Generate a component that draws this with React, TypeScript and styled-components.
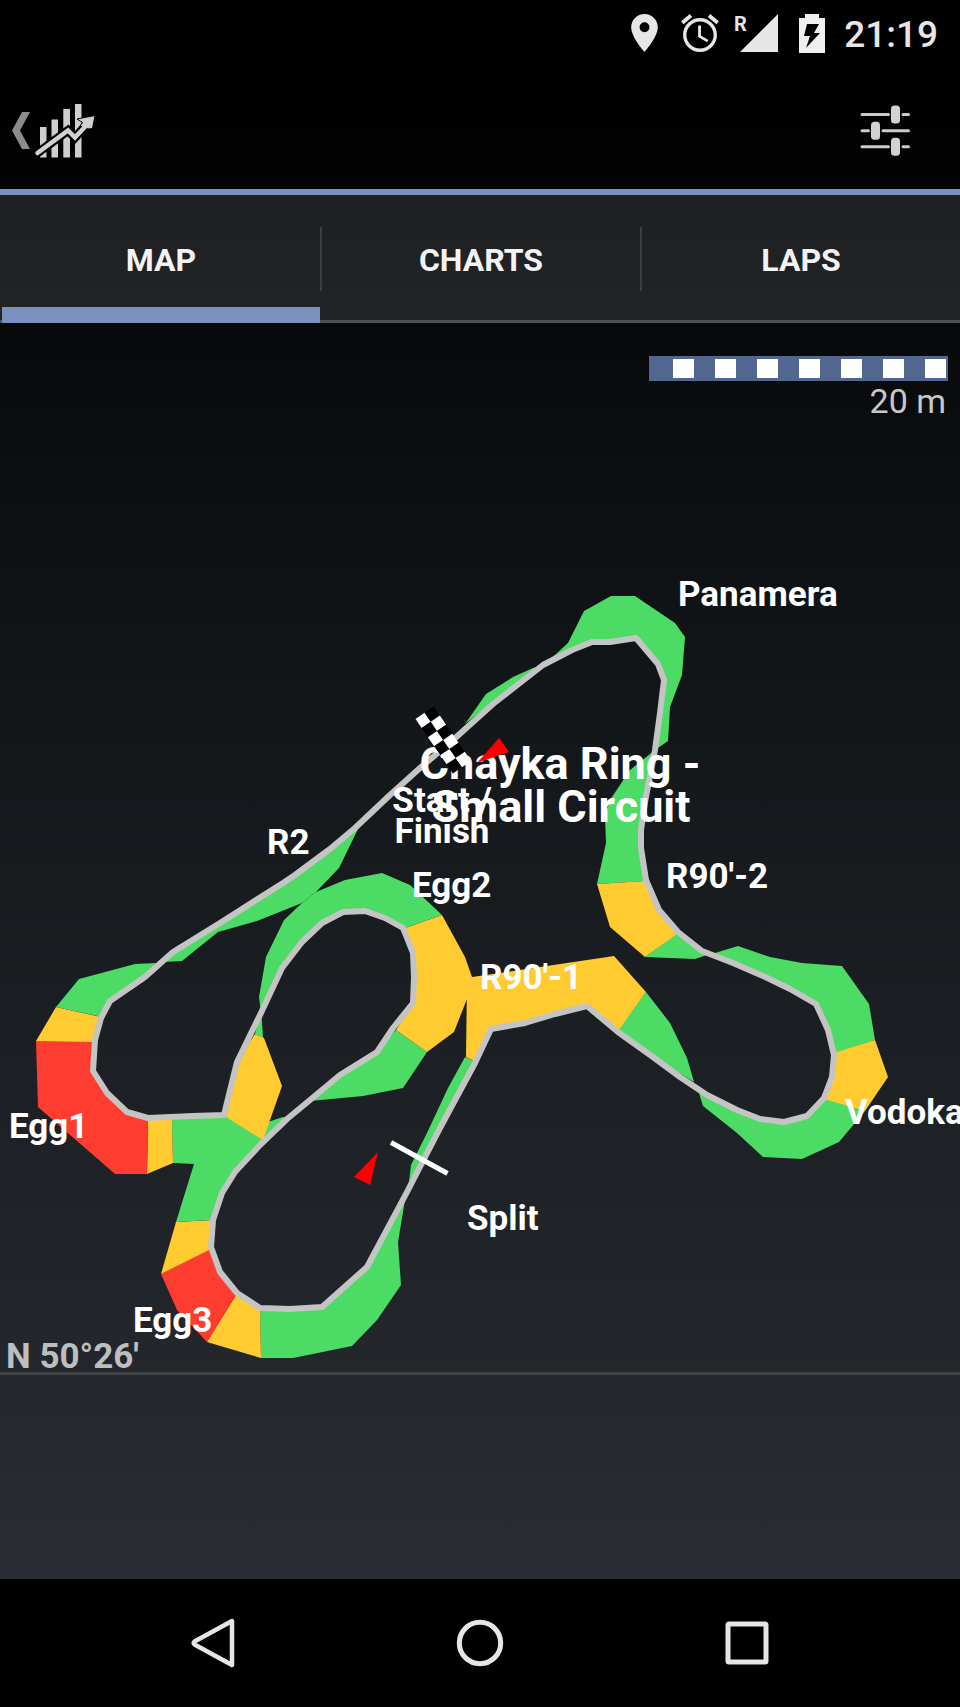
import React, { useState } from "react";
import styled, { createGlobalStyle } from "styled-components";

const GlobalStyle = createGlobalStyle`
  * { box-sizing: border-box; }
  body {
    margin: 0;
    background: #000;
    color: #fff;
    font-family: Roboto, "Liberation Sans", sans-serif;
  }
`;

const Screen = styled.div`
  display: flex;
  flex-direction: column;
  overflow: hidden;
  background: #000;
`;

const Window = styled.div`
  display: flex;
  flex-direction: column;
  background: linear-gradient(
    #000 0%,
    #000001 6%,
    #08090b 21%,
    #121518 42%,
    #1b1e22 64%,
    #23272b 86%,
    #2a2d34 100%
  );
`;

const StatusBar = styled.div`
  display: flex;
  align-items: center;
  justify-content: flex-end;
  height: 72px;
  padding: 0 22px 6px 0;
  color: #e6e6e6;
`;

const StatusIcon = styled.span`
  display: flex;
  justify-content: center;
  width: 56px;
`;

const Clock = styled.time`
  padding: 4px 0 0 4px;
  font-size: 37px;
  line-height: 40px;
  font-weight: 500;
`;

const AppBar = styled.header`
  display: flex;
  align-items: center;
  justify-content: space-between;
  height: 123px;
  padding: 0 48px 0 8px;
  border-bottom: 6px solid #7b90bd;
`;

const IconButton = styled.button`
  display: flex;
  padding: 0;
  border: 0;
  background: none;
  cursor: pointer;
`;

const TabBar = styled.div`
  display: grid;
  grid-template-columns: repeat(3, 1fr);
  height: 128px;
  background: linear-gradient(#1e1f21, #232426);
  box-shadow: inset 0 -3px #4f5053;
`;

const Tab = styled.button<{ $active: boolean }>`
  position: relative;
  padding: 2px 0 0 2px;
  border: 0;
  background: none;
  color: #f3f3f5;
  font-family: inherit;
  font-size: 32px;
  line-height: 40px;
  font-weight: 700;
  cursor: pointer;

  &:not(:first-child)::before {
    content: "";
    position: absolute;
    left: 0;
    top: 32px;
    width: 2px;
    height: 64px;
    background: #3c3d40;
  }

  &::after {
    content: "";
    position: absolute;
    left: 2px;
    right: 0;
    bottom: 0;
    height: 16px;
    background: ${(p) => (p.$active ? "#7b90bd" : "none")};
  }
`;

const MapPanel = styled.main`
  position: relative;
`;

const TrackMap = styled.svg`
  display: block;
  width: 100%;
  height: auto;
  font-family: inherit;
`;

const ScaleLegend = styled.div`
  position: absolute;
  top: 33px;
  right: 12px;
  display: flex;
  flex-direction: column;
  align-items: flex-end;
`;

const ScaleBar = styled.div`
  display: flex;
  justify-content: flex-end;
  gap: 21px;
  width: 299px;
  height: 25px;
  padding: 3px 2px;
  background: #526790;
`;

const ScaleCell = styled.span`
  width: 21px;
  background: #fff;
`;

const ScaleText = styled.span`
  padding-right: 2px;
  color: #c8c8ca;
  font-size: 34px;
  line-height: 40px;
`;

const NavBar = styled.nav`
  display: flex;
  height: 128px;
  padding: 0 80px;
  background: #000;
`;

const NavButton = styled.button`
  display: flex;
  flex: 1;
  align-items: center;
  justify-content: center;
  padding: 0;
  border: 0;
  background: none;
  cursor: pointer;
`;

const GREEN = "#4cdb64";
const YELLOW = "#ffcb30";
const RED = "#ff3c30";

const bands: { fill: string; points: string }[] = [
  { fill: GREEN, points: "465,724 486,694 513,677 533,668 543,665 555,655 568,643 584,611 611,596 635,596 675,623 685,637 682,675 670,707 668,741 655,750 660,713 664,680 658,664 636,638 610,643 592,643 572,650 543,665 493,702" },
  { fill: GREEN, points: "655,750 630,770 610,800 605,817 606,843 597,884 646,881 641,848 641,830 645,800" },
  { fill: YELLOW, points: "597,884 610,927 645,957 677,935 659,910 645,881" },
  { fill: GREEN, points: "645,957 695,959 707,955 702,951 677,934" },
  { fill: GREEN, points: "707,955 715,953 738,946 770,957 802,963 842,966 869,1004 875,1040 834,1054 828,1030 816,1004 790,988 763,975 733,963" },
  { fill: YELLOW, points: "875,1040 888,1077 865,1111 824,1100 832,1077 834,1053" },
  { fill: GREEN, points: "865,1111 839,1142 802,1159 763,1157 737,1133 703,1106 698,1090 707,1095 737,1111 760,1120 784,1123 807,1116 824,1099" },
  { fill: GREEN, points: "694,1082 687,1058 670,1023 646,992 617,1031 653,1057" },
  { fill: YELLOW, points: "646,992 614,956 472,977 467,980 466,1057 474,1061 491,1029 525,1023 555,1013 587,1006 618,1031" },
  { fill: GREEN, points: "465,1057 448,1088 427,1133 411,1165 408,1190 440,1128 474,1061" },
  { fill: GREEN, points: "405,1200 398,1242 401,1285 377,1320 352,1346 293,1358 261,1358 260,1309 322,1308 367,1267" },
  { fill: YELLOW, points: "261,1358 207,1342 236,1295 260,1308" },
  { fill: RED, points: "207,1342 177,1310 161,1274 210,1249 220,1272 236,1295" },
  { fill: YELLOW, points: "161,1274 176,1222 212,1220 211,1249" },
  { fill: GREEN, points: "176,1222 194,1164 173,1163 172,1119 226,1116 240,1118 263,1136 260,1145 235,1172 222,1193 212,1220" },
  { fill: GREEN, points: "262,1124 283,1117 287,1119 262,1142" },
  { fill: GREEN, points: "310,1101 363,1096 403,1088 427,1052 396,1030 377,1052 340,1075" },
  { fill: YELLOW, points: "427,1052 454,1032 467,999 475,985 472,977 465,957 442,915 405,928 413,953 414,977 413,1003 396,1030" },
  { fill: GREEN, points: "442,915 410,885 382,873 345,880 316,892 302,903 284,920 266,957 259,997 262,1022 263,1038 255,1034 260,1015 282,968 302,942 322,923 343,912 365,911 385,918 405,928" },
  { fill: YELLOW, points: "255,1034 264,1038 282,1086 263,1140 226,1117 237,1062" },
  { fill: YELLOW, points: "148,1119 172,1119 173,1163 147,1174" },
  { fill: RED, points: "148,1119 147,1174 115,1174 38,1107 36,1041 94,1041 93,1071 107,1093 127,1112" },
  { fill: YELLOW, points: "36,1041 56,1007 101,1017 94,1042" },
  { fill: GREEN, points: "56,1007 79,979 135,964 157,963 145,977 110,1001 102,1017" },
  { fill: GREEN, points: "163,962 182,961 218,932 257,921 302,903 316,892 339,868 359,827 330,850 295,877 220,923 173,952" },
];

const road =
  "420,768 453,740 493,704 543,665 572,650 592,642 610,642 636,638 658,664 664,680 660,713 655,750 645,802 641,830 641,848 646,880 659,910 678,932 702,951 733,963 763,976 790,989 816,1004 828,1030 834,1055 832,1077 824,1098 807,1116 784,1122 760,1119 737,1110 707,1095 680,1077 653,1057 618,1032 587,1006 555,1014 525,1023 491,1029 475,1063 440,1128 407,1192 367,1267 322,1307 290,1309 260,1308 237,1293 220,1272 211,1247 213,1220 222,1193 235,1172 260,1145 287,1119 310,1100 340,1075 377,1052 393,1028 413,1003 414,977 413,953 403,928 385,918 365,911 343,912 322,923 302,942 282,968 260,1015 237,1062 224,1115 193,1116 148,1118 127,1112 107,1093 93,1071 95,1040 101,1018 110,1001 145,977 173,952 220,923 283,883 295,875 330,849 355,828 390,795";

const labels: { x: number; y: number; text: string }[] = [
  { x: 678, y: 606, text: "Panamera" },
  { x: 267, y: 854, text: "R2" },
  { x: 412, y: 897, text: "Egg2" },
  { x: 666, y: 888, text: "R90'-2" },
  { x: 480, y: 989, text: "R90'-1" },
  { x: 845, y: 1124, text: "Vodoka" },
  { x: 9, y: 1138, text: "Egg1" },
  { x: 133, y: 1332, text: "Egg3" },
  { x: 467, y: 1230, text: "Split" },
];

const MapLabel = styled.text`
  fill: #fff;
  font-size: 35px;
  font-weight: 700;
`;

const CenteredLabel = styled(MapLabel)`
  text-anchor: middle;
`;

const MapTitle = styled(CenteredLabel)`
  font-size: 45px;
`;

const LatitudeLabel = styled(MapLabel)`
  fill: #bcbec0;
`;

const SignalLetter = styled.text`
  fill: #e6e6e6;
  font-size: 20px;
  font-weight: 700;
`;

function Flag() {
  const cells = [];
  for (let row = 0; row < 6; row++) {
    for (let col = 0; col < 2; col++) {
      cells.push(
        <rect
          key={`${row}-${col}`}
          x={col * 11}
          y={row * 11}
          width={11}
          height={11}
          fill={(row + col) % 2 === 0 ? "#fff" : "#000"}
        />
      );
    }
  }
  return <g transform="translate(415.500 719) rotate(-34.500)">{cells}</g>;
}

function CircuitMap() {
  return (
    <TrackMap viewBox="0 323 960 1256" role="img" aria-label="Circuit map">
      <path d="M0 1373.500H960" stroke="#404346" strokeWidth="3" />
      {bands.map((b) => (
        <polygon key={b.points} points={b.points} fill={b.fill} />
      ))}
      <polygon points={road} fill="none" stroke="#c4c4c4" strokeWidth="6" strokeLinejoin="round" />
      <path d="M391 1142.500L447.500 1173.500" stroke="#fff" strokeWidth="5" />
      <MapTitle x={560} y={779}>Chayka Ring -</MapTitle>
      <MapTitle x={561} y={822}>Small Circuit</MapTitle>
      <CenteredLabel x={442} y={812}>Start /</CenteredLabel>
      <CenteredLabel x={442} y={843}>Finish</CenteredLabel>
      {labels.map((l) => (
        <MapLabel key={l.text} x={l.x} y={l.y}>{l.text}</MapLabel>
      ))}
      <LatitudeLabel x={6} y={1368}>N 50°26'</LatitudeLabel>
      <Flag />
      <path d="M499 738L509 752L477 763Z" fill="#f00" />
      <path d="M378 1152L354 1177L370 1185Z" fill="#f00" />
    </TrackMap>
  );
}

const tabs = ["MAP", "CHARTS", "LAPS"];

export default function App() {
  const [active, setActive] = useState("MAP");
  return (
    <Screen>
      <GlobalStyle />
      <Window>
        <StatusBar>
          <StatusIcon>
            <svg width="27" height="38" viewBox="5 2 14 20" fill="#e6e6e6">
              <path d="M12 2C8.130 2 5 5.130 5 9c0 5.250 7 13 7 13s7-7.750 7-13c0-3.870-3.130-7-7-7zm0 9.600a2.600 2.600 0 1 1 0-5.200 2.600 2.600 0 0 1 0 5.200z" />
            </svg>
          </StatusIcon>
          <StatusIcon>
            <svg width="38" height="38" viewBox="2 1.860 20 20.140" fill="#e6e6e6">
              <path d="M22 5.720l-4.600-3.860-1.290 1.530 4.600 3.860L22 5.720zM7.880 3.390L6.600 1.860 2 5.710l1.290 1.530 4.590-3.850zM12.500 8H11v6l4.750 2.850.75-1.230-4-2.370V8zM12 4c-4.970 0-9 4.030-9 9s4.020 9 9 9c4.970 0 9-4.030 9-9s-4.030-9-9-9zm0 16.200c-3.980 0-7.200-3.220-7.200-7.200S8.020 5.800 12 5.800s7.200 3.220 7.200 7.200-3.220 7.200-7.200 7.200z" />
            </svg>
          </StatusIcon>
          <StatusIcon>
            <svg width="46" height="38" viewBox="-2 0 46 38" overflow="visible">
              <SignalLetter x={-1} y={17}>R</SignalLetter>
              <path d="M5 38L43 0V38Z" fill="#e6e6e6" />
            </svg>
          </StatusIcon>
          <StatusIcon>
            <svg width="26" height="39" viewBox="0 0 26 39">
              <path
                d="M0 4H6V0H20V4H26V39H0ZM8 10L5 22H11L7 34L21 19H15L20 10Z"
                fill="#f0f0f0"
                fillRule="evenodd"
              />
            </svg>
          </StatusIcon>
          <Clock>21:19</Clock>
        </StatusBar>

        <AppBar>
          <IconButton aria-label="Back to statistics">
            <svg width="92" height="60" viewBox="8 101 92 60">
              <path d="M22 112H30L20 130.500L30 149H22L12 130.500Z" fill="#8c8c8c" />
              <path
                d="M40 127H46.500V157.500H40ZM51.500 119.500H58V157.500H51.500ZM63.300 109H70V157.500H63.300ZM75 104H81.500V157.500H75Z"
                fill="#cfcfcf"
              />
              <path d="M37.500 153L68 130.500L75 137.500L87 124.500" fill="none" stroke="#020203" strokeWidth="9" strokeLinecap="round" />
              <path d="M95 115.500L77 119L82.500 122.500L80 126L88 129L92.500 128.500Z" fill="#cfcfcf" stroke="#020203" strokeWidth="1" />
              <path d="M37.500 153L68 130.500L75 137.500L89 122.500" fill="none" stroke="#d2d2d2" strokeWidth="4.500" strokeLinecap="round" />
            </svg>
          </IconButton>
          <IconButton aria-label="Settings">
            <svg width="54" height="54" viewBox="858 104 54 54">
              <g stroke="#cacaca" strokeWidth="3" strokeLinecap="round">
                <path d="M862 114.500H888.500M903 114.500H908.500M862 130.700H868.500M883 130.700H908.500M862 146.700H888.500M903 146.700H908.500" />
              </g>
              <g fill="#d2d2d2">
                <rect x="891" y="105.500" width="9" height="18" rx="3.500" />
                <rect x="871" y="121.700" width="9" height="18" rx="3.500" />
                <rect x="891" y="137.700" width="9" height="18" rx="3.500" />
              </g>
            </svg>
          </IconButton>
        </AppBar>

        <TabBar role="tablist">
          {tabs.map((t) => (
            <Tab
              key={t}
              role="tab"
              aria-selected={active === t}
              $active={active === t}
              onClick={() => setActive(t)}
            >
              {t}
            </Tab>
          ))}
        </TabBar>

        <MapPanel>
          <CircuitMap />
          <ScaleLegend>
            <ScaleBar>
              {[0, 1, 2, 3, 4, 5, 6].map((i) => (
                <ScaleCell key={i} />
              ))}
            </ScaleBar>
            <ScaleText>20 m</ScaleText>
          </ScaleLegend>
        </MapPanel>
      </Window>

      <NavBar>
        <NavButton aria-label="Back">
          <svg width="44" height="50" viewBox="0 0 44 50">
            <path d="M41 3V47L3.500 26.500Q2 25 3.500 23.500Z" fill="none" stroke="#e6e6e6" strokeWidth="4.500" strokeLinejoin="round" />
          </svg>
        </NavButton>
        <NavButton aria-label="Home">
          <svg width="48" height="48" viewBox="0 0 48 48">
            <circle cx="24" cy="24" r="20.700" fill="none" stroke="#e6e6e6" strokeWidth="5" />
          </svg>
        </NavButton>
        <NavButton aria-label="Recent apps">
          <svg width="44" height="44" viewBox="0 0 44 44">
            <rect x="3" y="3" width="38" height="38" rx="1" fill="none" stroke="#e6e6e6" strokeWidth="5" />
          </svg>
        </NavButton>
      </NavBar>
    </Screen>
  );
}
